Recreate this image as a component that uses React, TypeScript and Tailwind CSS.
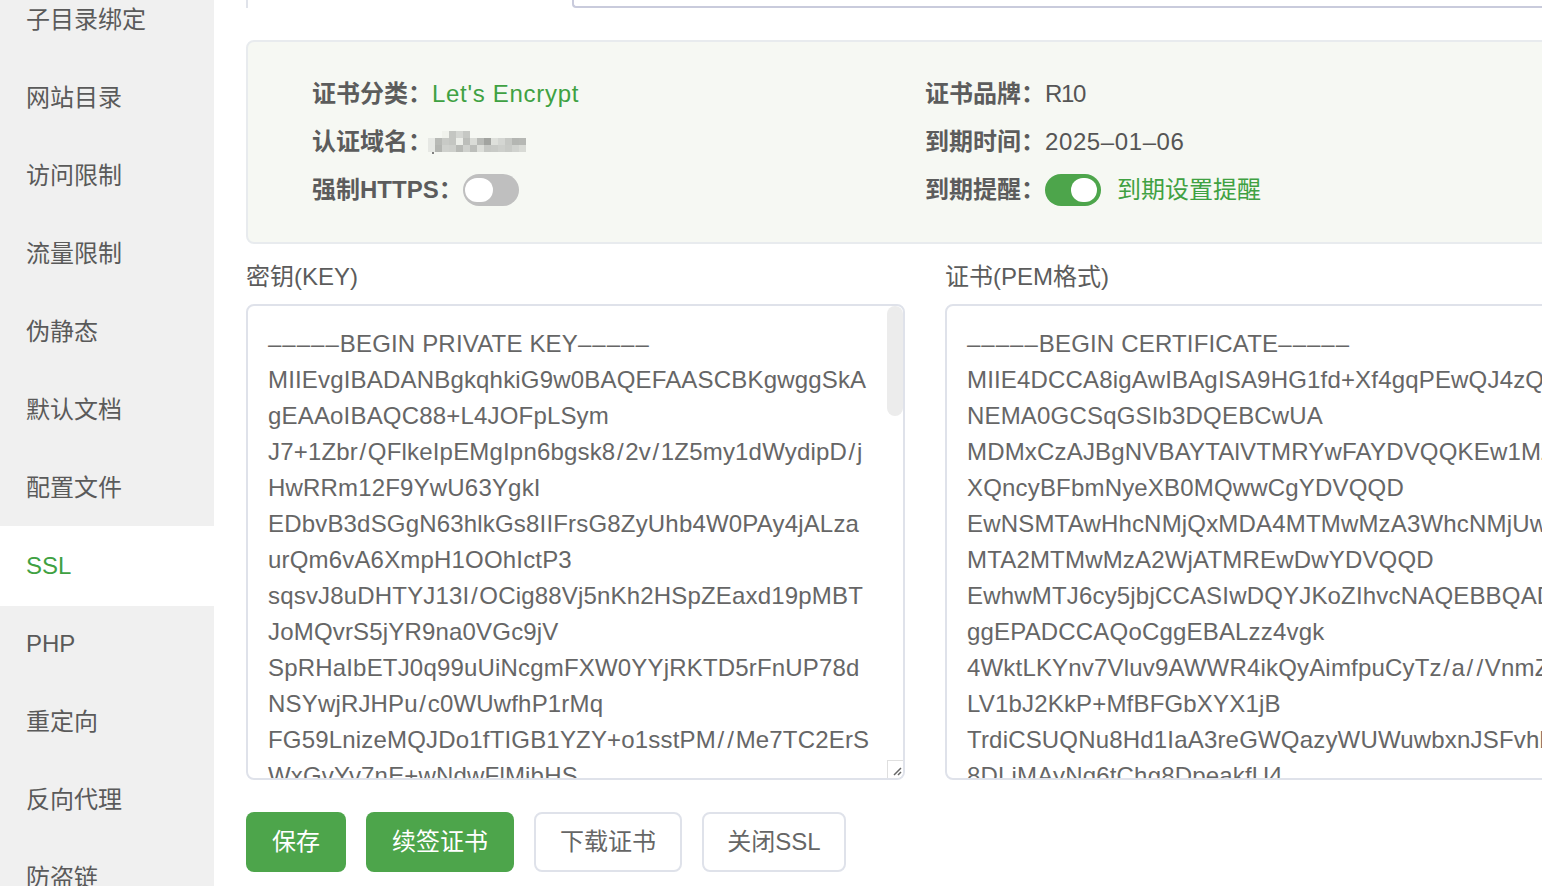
const menu = ["子目录绑定", "网站目录", "访问限制", "流量限制", "伪静态", "默认文档", "配置文件", "SSL", "PHP", "重定向", "反向代理", "防盗链"];

const keyLines = [
  "–––––BEGIN PRIVATE KEY–––––",
  "MIIEvgIBADANBgkqhkiG9w0BAQEFAASCBKgwggSkA",
  "gEAAoIBAQC88+L4JOFpLSym",
  "J7+1Zbr/QFlkeIpEMgIpn6bgsk8/2v/1Z5my1dWydipD/j",
  "HwRRm12F9YwU63YgkI",
  "EDbvB3dSGgN63hlkGs8IIFrsG8ZyUhb4W0PAy4jALza",
  "urQm6vA6XmpH1OOhIctP3",
  "sqsvJ8uDHTYJ13I/OCig88Vj5nKh2HSpZEaxd19pMBT",
  "JoMQvrS5jYR9na0VGc9jV",
  "SpRHaIbETJ0q99uUiNcgmFXW0YYjRKTD5rFnUP78d",
  "NSYwjRJHPu/c0WUwfhP1rMq",
  "FG59LnizeMQJDo1fTIGB1YZY+o1sstPM//Me7TC2ErS",
  "WxGvYv7nE+wNdwFlMibHS",
];

const certLines = [
  "–––––BEGIN CERTIFICATE–––––",
  "MIIE4DCCA8igAwIBAgISA9HG1fd+Xf4gqPEwQJ4zQ",
  "NEMA0GCSqGSIb3DQEBCwUA",
  "MDMxCzAJBgNVBAYTAlVTMRYwFAYDVQQKEw1MZ",
  "XQncyBFbmNyeXB0MQwwCgYDVQQD",
  "EwNSMTAwHhcNMjQxMDA4MTMwMzA3WhcNMjUwMTA",
  "MTA2MTMwMzA2WjATMREwDwYDVQQD",
  "EwhwMTJ6cy5jbjCCASIwDQYJKoZIhvcNAQEBBQAD",
  "ggEPADCCAQoCggEBALzz4vgk",
  "4WktLKYnv7Vluv9AWWR4ikQyAimfpuCyTz/a//VnmZ",
  "LV1bJ2KkP+MfBFGbXYX1jB",
  "TrdiCSUQNu8Hd1IaA3reGWQazyWUWuwbxnJSFvhb",
  "8DLiMAyNq6tChg8DpeakfU4",
];

const mosaic: [number, number, string][] = [
  [2, 0, "#f0f2ec"], [3, 0, "#c4c6c2"], [4, 0, "#d4d6d2"], [5, 0, "#c6c8c4"],
  [0, 1, "#e6e8e4"], [1, 1, "#b8bab6"], [2, 1, "#c8cac6"], [3, 1, "#c4c6c2"], [4, 1, "#eceee9"], [5, 1, "#bcbeba"], [6, 1, "#dadcd7"], [7, 1, "#b8bab6"], [8, 1, "#a2a4a0"], [9, 1, "#dee0db"], [10, 1, "#d4d6d2"], [11, 1, "#c6c8c4"], [12, 1, "#b4b6b2"], [13, 1, "#b6b8b4"],
  [0, 2, "#e6e8e4"], [1, 2, "#b4b6b2"], [2, 2, "#cfd1cd"], [3, 2, "#cdcfcb"], [4, 2, "#b8bab6"], [5, 2, "#cfd1cd"], [6, 2, "#bcbeba"], [7, 2, "#dcded9"], [8, 2, "#c6c8c4"], [9, 2, "#c8cac6"], [10, 2, "#cdcfcb"], [11, 2, "#c8cac6"], [12, 2, "#d0d2ce"], [13, 2, "#d8dad5"],
];

function Toggle({ on }: { on?: boolean }) {
  return (
    <span className={`flex h-8 w-14 shrink-0 items-center rounded-full ${on ? "justify-end bg-[#4da54b] pr-1" : "justify-start bg-[#bfbfbf] pl-[2px]"}`}>
      <span className={`h-6 rounded-full bg-white ${on ? "w-[26px]" : "w-7"}`} />
    </span>
  );
}

function Label({ children }: { children: React.ReactNode }) {
  return <span className="shrink-0 whitespace-nowrap font-semibold text-[#5c5c5c]">{children}</span>;
}

function CodeLine({ text }: { text: string }) {
  const parts = text.split(/([/]|–+)/).filter(Boolean);
  return (
    <div className="h-9 whitespace-nowrap leading-9 tracking-[0.18px]">
      {parts.map((p, i) =>
        p === "/" ? (
          <span key={i} className="mx-[1.5px]">/</span>
        ) : p[0] === "–" ? (
          <span key={i} className="tracking-[1px]">{p}</span>
        ) : (
          <span key={i}>{p}</span>
        ),
      )}
    </div>
  );
}

function CodeBox({ lines, width, scroll }: { lines: string[]; width: string; scroll?: boolean }) {
  return (
    <div className={`relative h-[476px] shrink-0 overflow-hidden rounded-lg border-2 border-[#dfe2ea] bg-white pl-5 pt-5 text-[#666] ${width}`}>
      {lines.map((l) => (
        <CodeLine key={l} text={l} />
      ))}
      {scroll && (
        <>
          <div className="absolute right-0 top-0 h-[110px] w-4 rounded-lg bg-[#ececec]" />
          <div className="absolute bottom-0 right-0 flex h-[18px] w-4 items-end justify-end border-l border-t border-[#dfdfdf] bg-white">
            <svg width="12" height="12" viewBox="0 0 12 12" className="mb-px" fill="none" stroke="#666" strokeWidth="1.5">
              <path d="M3 10 10 3M7 10l3-3" />
            </svg>
          </div>
        </>
      )}
    </div>
  );
}

export default function App() {
  return (
    <div className="flex h-[886px] w-[1542px] overflow-hidden bg-white text-[24px] text-[#666] [font-family:'Liberation_Sans','Noto_Sans_CJK_SC',sans-serif]">
      <aside className="-mt-[19px] h-[1000px] w-[214px] shrink-0 bg-[#f0f0f0]">
        {menu.map((m) => (
          <div
            key={m}
            className={m === "SSL" ? "flex h-20 -mt-px mb-[-1px] items-center bg-white pl-[26px] text-[#3fa142]" : "flex h-[78px] items-center pl-[26px] text-[#5a5a5a]"}
          >
            {m}
          </div>
        ))}
      </aside>

      <main className="min-w-0 flex-1 pl-8">
        <div className="flex h-2 w-[1400px]">
          <div className="w-[326px] border-l-2 border-[#e0e3ea]" />
          <div className="flex-1 rounded-bl border-b-2 border-l-2 border-[#c9cbdc]" />
        </div>

        <section className="mt-8 h-[204px] w-[1400px] rounded-lg border-2 border-[#e8ebee] bg-[#f6f8f3] pl-[64px] pt-[28px]">
          <div className="grid w-[1300px] grid-cols-[613px_1fr] [&>div]:flex [&>div]:h-12 [&>div]:items-center">
            <div><Label>证书分类：</Label><span className="tracking-[0.7px] text-[#3fa142]">Let's Encrypt</span></div>
            <div><Label>证书品牌：</Label><span className="tracking-[-1.3px] text-[#555]">R10</span></div>
            <div>
              <Label>认证域名：</Label>
              <svg width="100" height="24" viewBox="0 0 100 24" className="-ml-[4px]" shapeRendering="crispEdges">
                <g style={{ filter: "blur(0.5px)" }}>
                  {mosaic.map(([x, y, c]) => (
                    <rect key={`${x}-${y}`} x={x * 7} y={y * 7 + 1} width="7" height="7" fill={c} />
                  ))}
                </g>
                <rect x="4" y="22" width="2" height="2" fill="#808080" />
              </svg>
            </div>
            <div><Label>到期时间：</Label><span className="tracking-[0.6px] text-[#555]">2025–01–06</span></div>
            <div><Label>强制HTTPS：</Label><Toggle /></div>
            <div>
              <Label>到期提醒：</Label>
              <Toggle on />
              <span className="ml-4 whitespace-nowrap text-[#3fa142]">到期设置提醒</span>
            </div>
          </div>
        </section>

        <div className="mt-[15px] flex h-9 w-[1400px] items-center">
          <div className="w-[699px] text-[#5c5c5c]">密钥(KEY)</div>
          <div className="text-[#5c5c5c]">证书(PEM格式)</div>
        </div>

        <div className="mt-[9px] flex w-[1400px] gap-10">
          <CodeBox lines={keyLines} width="w-[659px]" scroll />
          <CodeBox lines={certLines} width="w-[700px]" />
        </div>

        <div className="mt-8 flex gap-5">
          <button className="h-[60px] w-[100px] rounded-lg bg-[#4da54b] text-white">保存</button>
          <button className="h-[60px] w-[148px] rounded-lg bg-[#4da54b] text-white">续签证书</button>
          <button className="h-[60px] w-[148px] rounded-lg border-2 border-[#dfe2ea] bg-white text-[#666]">下载证书</button>
          <button className="h-[60px] w-[144px] rounded-lg border-2 border-[#dfe2ea] bg-white text-[#666]">关闭SSL</button>
        </div>
      </main>
    </div>
  );
}
